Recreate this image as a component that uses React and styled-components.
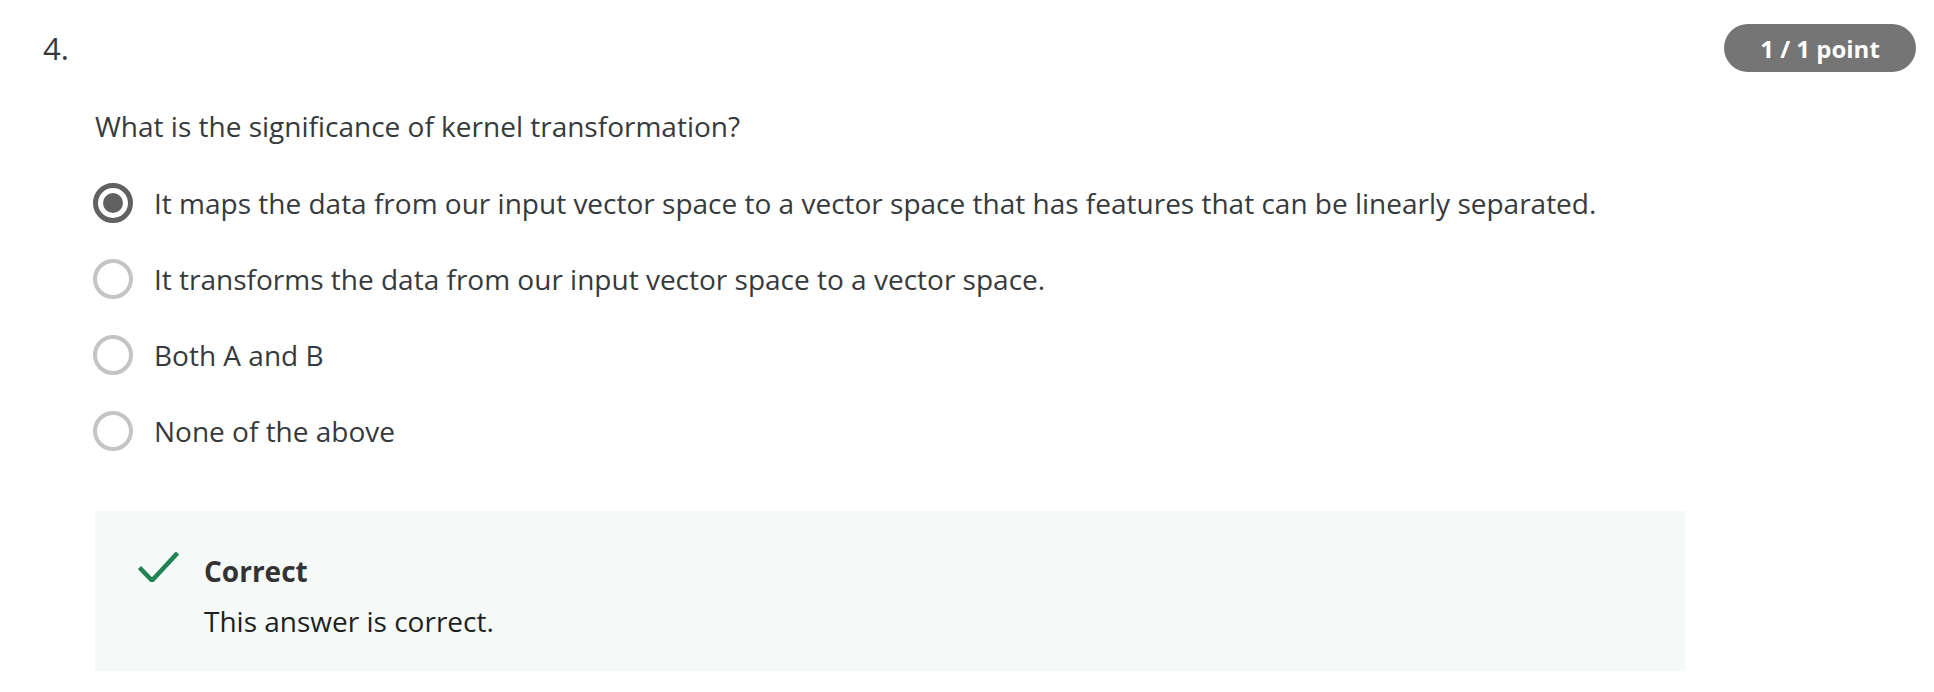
import React from "react";
import styled, { createGlobalStyle } from "styled-components";

const GlobalStyle = createGlobalStyle`
  html, body {
    margin: 0;
    padding: 0;
    background: #ffffff;
  }
  body {
    font-family: "Open Sans", "Noto Sans", Arial, sans-serif;
    color: #373a3c;
  }
  * { box-sizing: border-box; }
`;

const Page = styled.div`
  padding: 24px 18px 20px 43px;
`;

const Header = styled.div`
  display: flex;
  justify-content: space-between;
  align-items: center;
  height: 48px;
`;

const Number = styled.div`
  font-size: 31px;
  line-height: 40px;
  color: #373a3c;
`;

const Badge = styled.div`
  display: flex;
  align-items: center;
  justify-content: center;
  width: 192px;
  height: 48px;
  border-radius: 24px;
  background: #757575;
  color: #ffffff;
  font-weight: 700;
  font-size: 24px;
`;

const Body = styled.div`
  padding-left: 52px;
`;

const Question = styled.div`
  margin-top: 34px;
  font-size: 28px;
  line-height: 40px;
  color: #373a3c;
`;

const Options = styled.div`
  margin-top: 37px;
  margin-left: -2px;
  display: flex;
  flex-direction: column;
  gap: 36px;
`;

const Option = styled.label`
  display: flex;
  align-items: center;
  gap: 21px;
  height: 40px;
  font-size: 28px;
  line-height: 40px;
  color: #373a3c;
`;

const Radio = styled.span`
  flex: none;
  width: 40px;
  height: 40px;
  border-radius: 50%;
  border: ${(p) => (p.$checked ? "5px solid #616161" : "4px solid #c4c4c4")};
  display: flex;
  align-items: center;
  justify-content: center;
  &::after {
    content: "";
    display: ${(p) => (p.$checked ? "block" : "none")};
    width: 20px;
    height: 20px;
    border-radius: 50%;
    background: #616161;
  }
`;

const Feedback = styled.div`
  margin-top: 60px;
  width: 1590px;
  height: 160px;
  background: #f5f9f8;
  padding: 40px 43px 0 43px;
  display: flex;
  gap: 25px;
`;

const CheckIcon = styled.svg`
  flex: none;
  width: 41px;
  height: 30px;
  margin-top: 1px;
`;

const FeedbackText = styled.div`
  display: flex;
  flex-direction: column;
`;

const FeedbackTitle = styled.div`
  font-weight: 700;
  font-size: 28px;
  line-height: 40px;
  color: #333333;
`;

const FeedbackBody = styled.div`
  margin-top: 10px;
  font-size: 28px;
  line-height: 40px;
  color: #1f1f1f;
`;

const options = [
  "It maps the data from our input vector space to a vector space that has features that can be linearly separated.",
  "It transforms the data from our input vector space to a vector space.",
  "Both A and B",
  "None of the above",
];

export default function App() {
  return (
    <>
      <GlobalStyle />
      <Page>
        <Header>
          <Number>4.</Number>
          <Badge>1 / 1 point</Badge>
        </Header>
        <Body>
          <Question>What is the significance of kernel transformation?</Question>
          <Options>
            {options.map((o, i) => (
              <Option key={i}>
                <Radio $checked={i === 0} />
                {o}
              </Option>
            ))}
          </Options>
          <Feedback>
            <CheckIcon viewBox="0 0 41 30">
              <path d="M1.5 15.5 L14 28.5 L39.5 1" fill="none" stroke="#1f8354" strokeWidth="4.5" />
            </CheckIcon>
            <FeedbackText>
              <FeedbackTitle>Correct</FeedbackTitle>
              <FeedbackBody>This answer is correct.</FeedbackBody>
            </FeedbackText>
          </Feedback>
        </Body>
      </Page>
    </>
  );
}
